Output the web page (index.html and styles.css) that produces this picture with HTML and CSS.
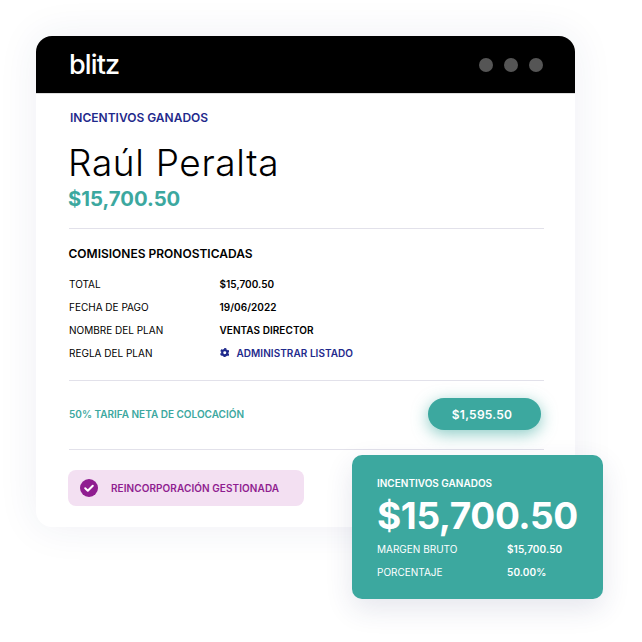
FILE: index.html
```html
<!DOCTYPE html>
<html lang="es">
<head>
<meta charset="utf-8">
<title>Blitz</title>
<link rel="stylesheet" href="styles.css">
</head>
<body>
<div class="stage">
  <main class="card">
    <header class="bar">
      <span class="logo">blitz</span>
      <div class="dots"><i></i><i></i><i></i></div>
    </header>
    <div class="content">
      <div class="eyebrow">INCENTIVOS GANADOS</div>
      <h1 class="name">Raúl Peralta</h1>
      <div class="amount">$15,700.50</div>
      <hr class="rule rule-a">
      <h2 class="section">COMISIONES PRONOSTICADAS</h2>
      <dl class="facts">
        <dt>TOTAL</dt><dd>$15,700.50</dd>
        <dt>FECHA DE PAGO</dt><dd>19/06/2022</dd>
        <dt>NOMBRE DEL PLAN</dt><dd>VENTAS DIRECTOR</dd>
        <dt>REGLA DEL PLAN</dt>
        <dd class="link">
          <svg class="gear" viewBox="0 0 24 24" width="9.500" height="9.500"><circle class="gear-ring" cx="12" cy="12" r="6.500"/><circle class="gear-teeth" cx="12" cy="12" r="10"/></svg>
          ADMINISTRAR LISTADO
        </dd>
      </dl>
      <hr class="rule">
      <div class="rate">
        <span class="rate-label">50% TARIFA NETA DE COLOCACIÓN</span>
        <span class="pill">$1,595.50</span>
      </div>
      <hr class="rule">
      <div class="badge">
        <svg class="check" viewBox="0 0 18 18" width="18" height="18"><circle cx="9" cy="9" r="9" fill="#8f1d90"/><path d="M5.200 9.300l2.600 2.500 5-5" fill="none" stroke="#fff" stroke-width="2" stroke-linecap="round" stroke-linejoin="round"/></svg>
        <span>REINCORPORACIÓN GESTIONADA</span>
      </div>
    </div>
  </main>
  <aside class="float">
    <div class="float-title">INCENTIVOS GANADOS</div>
    <div class="float-amount">$15,700.50</div>
    <dl class="float-facts">
      <dt>MARGEN BRUTO</dt><dd>$15,700.50</dd>
      <dt>PORCENTAJE</dt><dd>50.00%</dd>
    </dl>
  </aside>
</div>
</body>
</html>
```
FILE: styles.css
```css
* { box-sizing: border-box; }
html, body { margin: 0; background: #fff; }
body { font-family: "Inter", "Liberation Sans", sans-serif; color: #000; }
.stage { position: relative; width: 642px; height: 642px; padding: 36px 67px 0 36px; overflow: hidden; }
.card { height: 491px; background: #fff; border-radius: 16px; box-shadow: 0 0 40px rgba(40, 50, 110, .08); }
.bar { height: 58px; background: #000; border-radius: 16px 16px 0 0; border-bottom: 1px solid #ddd; display: flex; align-items: center; justify-content: space-between; padding: 0 32px 0 33px; }
.logo { color: #fff; font-size: 27px; font-weight: 550; letter-spacing: -.85px; line-height: 1; }
.dots { display: flex; gap: 11px; }
.dots i { width: 14px; height: 14px; border-radius: 50%; background: #555; }
.content { padding: 0 31px 0 33px; }
.eyebrow { margin: 16px 0 0 1px; font-size: 12px; line-height: 16px; font-weight: 600; color: #1f2a8c; }
.name { margin: 15px 0 0 -1px; font-size: 37px; line-height: 44px; font-weight: 300; letter-spacing: .65px; }
.amount { margin: 1px 0 0 -1px; font-size: 20.300px; line-height: 25px; font-weight: 700; color: #3ca89f; }
.rule { margin: 0; border: 0; height: 1px; background: #e2e1ea; }
.rule-a { margin-top: 17px; }
.section { margin: 17px 0 0 -.5px; font-size: 12px; line-height: 16px; font-weight: 600; }
.facts { margin: 10px 0 0; display: grid; grid-template-columns: 150.500px 1fr; grid-auto-rows: 23px; align-items: center; font-size: 10px; }
.facts dt { font-weight: 400; }
.facts dd { margin: 0; font-weight: 600; letter-spacing: .05px; }
.facts .link { color: #1f2a8c; display: flex; align-items: center; gap: 7.500px; }
.gear { fill: none; stroke: #1f2a8c; }
.gear-ring { stroke-width: 5.500; }
.gear-teeth { stroke-width: 4; stroke-dasharray: 5.200 5.272; stroke-dashoffset: -2.620; }
.facts + .rule { margin-top: 16px; }
.rate { height: 68px; display: flex; align-items: center; justify-content: space-between; padding: 0 3px 2px 0; }
.rate-label { font-size: 10px; font-weight: 600; color: #3ca89f; }
.pill { width: 113px; height: 32px; padding-right: 5px; border-radius: 16px; background: #3ca89f; color: #fff; font-size: 12px; font-weight: 600; letter-spacing: .25px; display: flex; align-items: center; justify-content: center; box-shadow: 0 4px 16px rgba(60, 168, 159, .6); }
.badge { margin: 20px 0 0 -1px; width: 236px; height: 36px; border-radius: 8px; background: #f3e0f2; color: #8f1d90; font-size: 10px; font-weight: 600; letter-spacing: .08px; display: flex; align-items: center; gap: 13px; padding-left: 12px; }
.float { position: absolute; left: 352px; top: 455px; width: 251px; height: 144px; border-radius: 10px; background: #3ca89f; color: #fff; padding: 22px 24px 0 25px; box-shadow: 0 10px 28px rgba(40, 50, 110, .12); }
.float-title { font-size: 10px; line-height: 13px; font-weight: 600; }
.float-amount { margin-top: 3px; font-size: 37px; line-height: 45px; font-weight: 700; letter-spacing: -.4px; white-space: nowrap; }
.float-facts { margin: -1px 0 0; display: grid; grid-template-columns: 130px 1fr; grid-auto-rows: 23px; align-items: center; font-size: 10px; }
.float-facts dt { font-weight: 400; }
.float-facts dd { margin: 0; font-weight: 600; letter-spacing: .1px; }
```
